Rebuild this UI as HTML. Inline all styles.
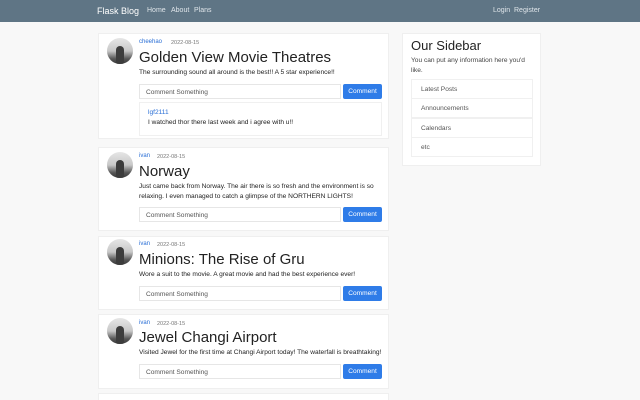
<html style="overflow:hidden"><head><style>
html,body{margin:0;width:640px;height:400px;overflow:hidden}
body{background:#f8f8f8;font-family:"Liberation Sans",sans-serif;position:relative}
.nav{position:absolute;left:0;top:0;width:640px;height:22px;background:#5f7585}
.nav span{position:absolute;top:7px;font-size:7px;color:#dfe5ea}
.a{position:absolute}
.card{position:absolute;left:98px;width:291px;background:#fff;border:1px solid #efefef;box-sizing:border-box}
.av{position:absolute;left:8px;width:26px;height:26px;border-radius:50%;overflow:hidden;background:linear-gradient(#e6e6e6,#c8c8c8 50%,#555 80%,#3a3a3a)}
.av:after{content:"";position:absolute;left:9px;top:8px;width:8px;height:18px;background:#3c3c3c;border-radius:4px 4px 0 0}
.u{position:absolute;left:40px;font-size:6px;color:#2a6fd6}
.d{position:absolute;font-size:5.5px;color:#777}
.t{position:absolute;left:40px;font-size:15px;color:#222}
.c{position:absolute;left:40px;font-size:6.6px;color:#222;width:245px;line-height:10px}
.in{position:absolute;left:40px;width:202px;height:15px;border:1px solid #e6e6e6;box-sizing:border-box;font-size:6.6px;color:#555;padding:4px 0 0 6px}
.btn{position:absolute;left:244px;width:39px;height:15px;background:#2f7ce8;border-radius:2px;color:#fff;font-size:6.6px;text-align:center;line-height:15px}
.li{position:absolute;left:411px;width:122px;height:20px;border:1px solid #f0f0f0;box-sizing:border-box;font-size:6.6px;color:#555;padding:6px 0 0 9px}
</style></head><body>
<div class="nav"><span style="left:97px;font-size:9px;top:6px;color:#fff">Flask Blog</span><span style="left:147px">Home</span><span style="left:171px">About</span><span style="left:194px">Plans</span><span style="left:493px">Login</span><span style="left:514px">Register</span></div>

<div class="card" style="top:33px;height:106px">
<div class="av" style="top:4px"></div><div class="u" style="top:5px">cheehao</div><div class="d" style="left:72px;top:6px">2022-08-15</div>
<div class="t" style="top:15px">Golden View Movie Theatres</div>
<div class="c" style="top:34px">The surrounding sound all around is the best!! A 5 star experience!!</div>
<div class="in" style="top:50px">Comment Something</div><div class="btn" style="top:50px">Comment</div>
<div class="a" style="left:40px;top:68px;width:243px;height:34px;border:1px solid #f0f0f0;box-sizing:border-box"><div class="a" style="left:8px;top:6px;font-size:6.6px;color:#2a6fd6">lgf2111</div><div class="a" style="left:8px;top:16px;font-size:6.6px;color:#222">I watched thor there last week and i agree with u!!</div></div>
</div>

<div class="card" style="top:147px;height:84px">
<div class="av" style="top:4px"></div><div class="u" style="top:5px">ivan</div><div class="d" style="left:58px;top:6px">2022-08-15</div>
<div class="t" style="top:15px">Norway</div>
<div class="c" style="top:34px">Just came back from Norway. The air there is so fresh and the environment is so relaxing. I even managed to catch a glimpse of the NORTHERN LIGHTS!</div>
<div class="in" style="top:59px">Comment Something</div><div class="btn" style="top:59px">Comment</div>
</div>

<div class="card" style="top:236px;height:74px">
<div class="av" style="top:2px"></div><div class="u" style="top:4px">ivan</div><div class="d" style="left:58px;top:5px">2022-08-15</div>
<div class="t" style="top:14px">Minions: The Rise of Gru</div>
<div class="c" style="top:33px">Wore a suit to the movie. A great movie and had the best experience ever!</div>
<div class="in" style="top:49px">Comment Something</div><div class="btn" style="top:49px">Comment</div>
</div>

<div class="card" style="top:314px;height:75px">
<div class="av" style="top:3px"></div><div class="u" style="top:5px">ivan</div><div class="d" style="left:58px;top:6px">2022-08-15</div>
<div class="t" style="top:14px">Jewel Changi Airport</div>
<div class="c" style="top:33px">Visited Jewel for the first time at Changi Airport today! The waterfall is breathtaking!</div>
<div class="in" style="top:49px">Comment Something</div><div class="btn" style="top:49px">Comment</div>
</div>

<div class="card" style="top:393px;height:7px;border-bottom:none"></div>

<div class="a" style="left:402px;top:33px;width:139px;height:133px;background:#fff;border:1px solid #efefef;box-sizing:border-box">
<div class="a" style="left:8px;top:4px;font-size:13px;color:#222">Our Sidebar</div>
<div class="a" style="left:8px;top:22px;width:118px;font-size:6.6px;line-height:9.5px;color:#444">You can put any information here you'd like.</div>
</div>
<div class="li" style="top:79px">Latest Posts</div>
<div class="li" style="top:98px">Announcements</div>
<div class="li" style="top:118px">Calendars</div>
<div class="li" style="top:137px">etc</div>
</body></html>
